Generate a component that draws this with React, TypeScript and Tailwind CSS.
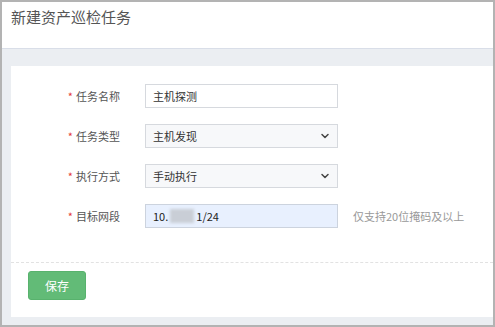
import { ChevronDown } from 'lucide-react';

const font = { fontFamily: '"Noto Sans CJK SC", "Noto Sans", sans-serif' };

function Label({ text }: { text: string }) {
  return (
    <div className="w-[109px] shrink-0 text-right text-[11px] text-[#555] leading-none">
      <span className="text-[#e4393c] mr-[3px]">*</span>
      {text}
    </div>
  );
}

function SelectBox({ value }: { value: string }) {
  return (
    <div className="ml-[25px] w-[193px] h-[24px] border border-[#d6d9de] bg-[#f7f8fa] flex items-center justify-between pl-[7px] pr-[6px] text-[11px] text-[#333]">
      <span>{value}</span>
      <ChevronDown size={12} strokeWidth={3} className="text-[#444]" />
    </div>
  );
}

export default function App() {
  return (
    <div
      style={font}
      className="w-[495px] h-[327px] border-2 border-[#b3b3b3] bg-[#ebeef2] flex flex-col overflow-hidden"
    >
      {/* Header */}
      <div className="h-[47px] shrink-0 bg-white border-b border-[#d9dee8] pl-[9px] pt-[5px]">
        <h1 className="text-[15px] text-[#555] leading-[20px]">新建资产巡检任务</h1>
      </div>

      <div className="flex-1 pl-[9px] pt-[17px] pb-[8px] flex">
        <div className="flex-1 bg-white flex flex-col">
          <div className="pt-[18px] flex flex-col gap-[16px]">
            <div className="flex items-center">
              <Label text="任务名称" />
              <div className="ml-[25px] w-[193px] h-[24px] border border-[#d6d9de] bg-white flex items-center pl-[7px] text-[11px] text-[#333]">
                主机探测
              </div>
            </div>
            <div className="flex items-center">
              <Label text="任务类型" />
              <SelectBox value="主机发现" />
            </div>
            <div className="flex items-center">
              <Label text="执行方式" />
              <SelectBox value="手动执行" />
            </div>
            <div className="flex items-center">
              <Label text="目标网段" />
              <div className="ml-[25px] w-[193px] h-[24px] border border-[#ccd3de] bg-[#e8f0fe] flex items-center pl-[7px] text-[11px] text-[#222]">
                <span>10.</span>
                <span className="w-[24px] h-[14px] bg-[#c9ced6] blur-[1.5px] mx-[2px]" />
                <span>1/24</span>
              </div>
              <span className="ml-[15px] text-[11px] text-[#999]">仅支持20位掩码及以上</span>
            </div>
          </div>

          <div className="mt-[34px] border-t border-dashed border-[#e2e2e2]" />

          <div className="pl-[17px] pt-[8px]">
            <button className="w-[58px] h-[29px] rounded-[3px] bg-[#62bb77] border border-[#58b26d] text-white text-[12px]">
              保存
            </button>
          </div>
        </div>
      </div>
    </div>
  );
}
